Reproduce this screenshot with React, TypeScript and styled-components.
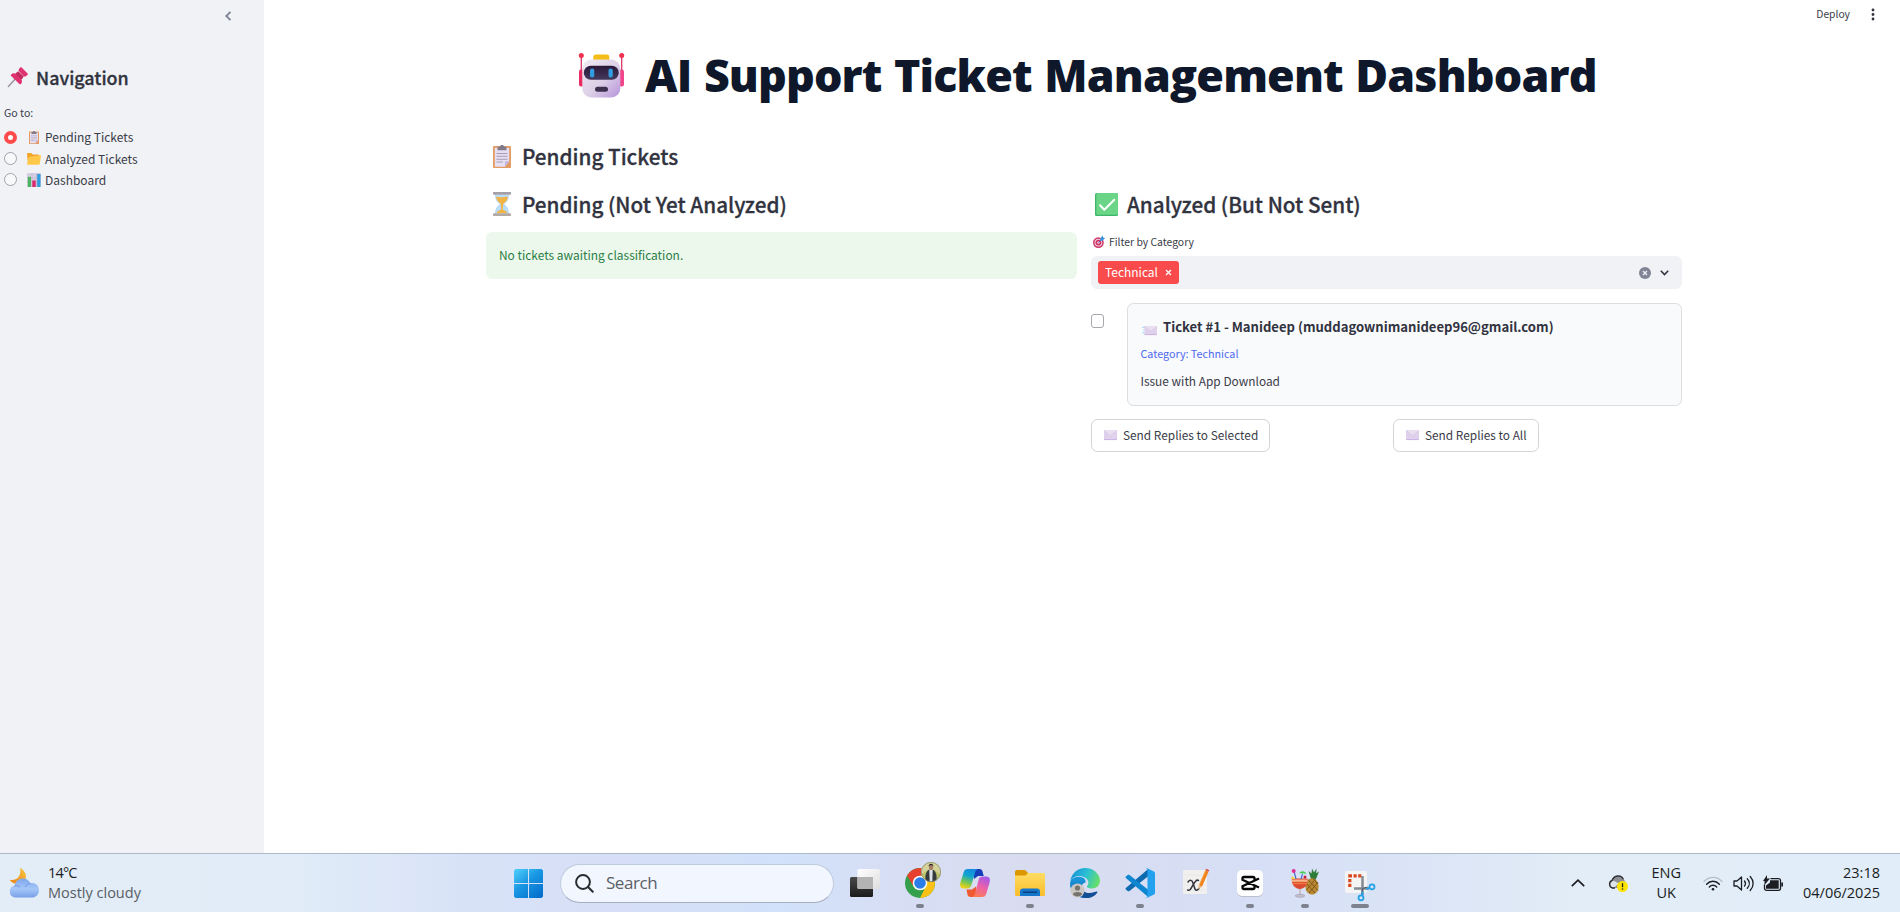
import React from "react";
import styled, { createGlobalStyle, css } from "styled-components";

const source = '"Noto Sans CJK SC", sans-serif';
const segoe = '"Open Sans", "Noto Sans", sans-serif';

const GlobalStyle = createGlobalStyle`
  * { box-sizing: border-box; }
  body { margin: 0; background: #fff; overflow: hidden; color: #3a3c48; font-family: ${source}; }
  h1, h2, h3, p { margin: 0; }
  button { font: inherit; color: inherit; background: none; border: 0; padding: 0; }
  svg { display: block; flex: none; overflow: visible; }
`;

/* ---------- emoji and small glyphs ---------- */

const Pin = ({ size = 20 }: { size?: number }) => (
  <svg width={size} height={size} viewBox="0 0 20 20">
    <path d="M7.6 11.4 0.4 19.4" stroke="#9b95a3" strokeWidth="1.5" strokeLinecap="round" />
    <path d="M9.3 5.2 15 10.8 11.6 14.6 5.6 8.6Z" fill="#b52055" />
    <path d="M3.2 7.4C5 5.8 7 6 8.6 7.6l4.2 4.2c1.600 1.600 1.600 3.600.2 5.200-.5.5-1.100.4-1.600 0L3.200 9c-.6-.6-.5-1.100 0-1.600Z" fill="#e0326f" />
    <path d="M11.800.8c.5-.6 1.200-.8 1.800-.2l5.800 5.600c.6.6.6 1.300 0 1.800l-1.600 1.300c-.7.5-1.400.4-2-.1L11 4.300c-.5-.6-.6-1.300-.2-1.900Z" fill="#e0326f" />
    <path d="M10.200 4.200 15.800 9.600 13.600 12 7.600 6.600Z" fill="#c62a5f" />
  </svg>
);

const Clipboard = ({ w, h }: { w: number; h: number }) => (
  <svg width={w} height={h} viewBox="0 0 18 26" preserveAspectRatio="none">
    <rect y="1" width="18" height="25" rx="1" fill="#e39b62" />
    <path d="M1.800 3h14.400v15.500L12 24.500H1.800Z" fill="#e6dff2" />
    <path d="M16.200 18.500 12 24.500v-5c0-.6.4-1 1-1Z" fill="#c4b3dc" />
    <path d="M4.500 2h2.300C7 .7 7.800 0 9 0s2 .7 2.200 2h2.300v3.800h-9Z" fill="#82798b" />
    <path d="M3.500 9.500h11M3.500 12.700h11M3.500 16h11M3.500 19.200h6.500" stroke="#a69db3" strokeWidth="1.100" />
  </svg>
);

const Folder = () => (
  <svg width="14" height="12" viewBox="0 0 14 12">
    <path d="M0 1.200C0 .5.5 0 1.200 0h3l1.500 1.500h5.100c.7 0 1.200.5 1.200 1.200V11H1Z" fill="#f0a52a" />
    <path d="M2.600 3.700 13 2.200c.7-.1 1.100.3 1 .9l-1.200 7.600c-.1.700-.5 1.100-1.200 1.100H1.200C.4 11.800 0 11.300.2 10.500L1.600 4.700c.2-.6.5-.9 1-1Z" fill="#ffc84a" />
  </svg>
);

const BarChart = () => (
  <svg width="14" height="14" viewBox="0 0 14 14">
    <rect width="14" height="14" rx="1" fill="#d5cde3" />
    <path d="M0 5h14M0 9h14M5 0v14M9.500 0v14" stroke="#b7adc7" strokeWidth=".5" />
    <rect x=".8" y="3.800" width="3.200" height="10.200" fill="#4cb463" />
    <rect x="5.300" y="7.500" width="3.400" height="6.500" fill="#d8286b" />
    <rect x="10.200" y="1" width="3.300" height="13" fill="#2f9cdf" />
  </svg>
);

const Robot = () => (
  <svg width="45" height="45" viewBox="0 0 45 45">
    <defs>
      <linearGradient id="head" x1="0" y1="0" x2="1" y2="1">
        <stop offset="0" stopColor="#f1ebf3" /><stop offset=".55" stopColor="#dccfe6" /><stop offset="1" stopColor="#b692dc" />
      </linearGradient>
      <linearGradient id="visor" x1="0" y1="0" x2="0" y2="1">
        <stop offset="0" stopColor="#2a1738" /><stop offset="1" stopColor="#443a5c" />
      </linearGradient>
    </defs>
    <path d="M2.300 3v16M42.700 3v16" stroke="#d93869" strokeWidth="1.300" />
    <circle cx="2.300" cy="2.600" r="2.500" fill="#f2304f" /><circle cx="42.700" cy="2.600" r="2.500" fill="#f2304f" />
    <rect x="0" y="16.500" width="5" height="17" rx="2" fill="#e92d63" /><rect x="40" y="16.500" width="5" height="17" rx="2" fill="#f0468b" />
    <rect x="14.300" y="1.500" width="16" height="7" rx="2.500" fill="#f4bd17" />
    <rect x="3.300" y="6.500" width="38" height="38" rx="9" fill="url(#head)" />
    <rect x="4.800" y="12.700" width="35" height="14" rx="7" fill="url(#visor)" />
    <rect x="11" y="15.500" width="4.300" height="9" rx="2.100" fill="#319de0" /><rect x="29.500" y="15.500" width="4.300" height="9" rx="2.100" fill="#319de0" />
    <rect x="16" y="33.700" width="13" height="5" rx="2.500" fill="#3e3150" />
  </svg>
);

const Hourglass = () => (
  <svg width="18" height="24" viewBox="0 0 18 24">
    <path d="M2 2.500h14c0 5-1.500 7-4.800 9.500C14.500 14.500 16 17 16 21.500H2c0-4.500 1.500-7 4.800-9.500C3.500 9.500 2 7.500 2 2.500Z" fill="#b9dcfa" />
    <path d="M3 4.500c3 1.400 9 .2 12 .2-.3 3-2 5-4.700 7l-.6 6c2.300.6 4.300 2 4.800 3.300H3.500c.6-1.600 2.600-2.800 4.800-3.300l-.6-6C5 9.700 3.200 7.500 3 4.500Z" fill="#efb443" />
    <rect width="18" height="2.700" rx=".8" fill="#a3a0a8" /><rect y="21.300" width="18" height="2.700" rx=".8" fill="#b1a9a3" />
  </svg>
);

const CheckMark = () => (
  <svg width="23" height="23" viewBox="0 0 23 23">
    <rect width="23" height="23" rx="1.500" fill="#3fb56b" />
    <rect x="1.300" width="21.700" height="21.700" rx="1.500" fill="#6bd587" />
    <path d="M5 12.200 9.300 16.800 19.300 6.800" fill="none" stroke="#fff" strokeWidth="2" strokeLinecap="round" strokeLinejoin="round" />
  </svg>
);

const Target = () => (
  <svg width="12" height="12" viewBox="0 0 12 12">
    <circle cx="5.400" cy="6.600" r="5.400" fill="#cf3568" /><circle cx="5.400" cy="6.600" r="3.900" fill="#eccfe0" />
    <circle cx="5.400" cy="6.600" r="2.900" fill="#d23466" /><circle cx="5.400" cy="6.600" r="1.200" fill="#f3dbe7" />
    <path d="M5.500 6.500 9 3" stroke="#4a76bd" strokeWidth="1" /><path d="M7.300 2.400 9.700-.4l.5 1.900 1.900.5L9.600 4.800 7.300 4.700Z" fill="#3a93dd" />
  </svg>
);

const Envelope = ({ flying = false }: { flying?: boolean }) => (
  <svg width={flying ? 15 : 13} height={flying ? 9 : 10} viewBox={flying ? "-2.500 0 15.500 10" : "0 0 13 10"} preserveAspectRatio="none">
    {flying && <path d="M-2.500 1.500H.5M-1.500 4.500H.5M-2.500 7.500H.5" stroke="#93d3f3" strokeWidth=".9" />}
    <rect width="13" height="10" rx=".6" fill="#dfd0ec" />
    <path d="M0 .5 6.500 6 13 .5V0H0Z" fill="#e9dff0" /><path d="M0 .5 6.500 5.900 13 .5" fill="none" stroke="#cdb9df" strokeWidth=".5" />
    <path d="M0 9.600h13" stroke="#c7a9e2" strokeWidth=".8" />
  </svg>
);

/* ---------- app shell ---------- */

const Screen = styled.div`display: flex; flex-direction: column; width: 1900px; height: 912px;`;
const AppArea = styled.div`display: flex; height: 853px;`;

const Sidebar = styled.aside`
  width: 264px; flex: none; background: #f0f2f6; display: flex; flex-direction: column; padding: 10px 0 0 4px;
`;
const Collapse = styled.button`display: flex; align-self: flex-end; margin-right: 32px; height: 12px; align-items: center;`;
const SideTitle = styled.h2`
  display: flex; align-items: center; gap: 8px; height: 26px; margin: 42px 0 0 4px; color: #31333f;
  font-size: 17.900px; font-weight: 500; line-height: 26px; -webkit-text-stroke: .3px #31333f;
`;
const SideLabel = styled.p`margin-top: 15px; font-size: 10.600px; line-height: 16px;`;
const RadioGroup = styled.div`display: flex; flex-direction: column; margin-top: 5.500px;`;
const RadioRow = styled.label`display: flex; align-items: center; height: 21.400px; font-size: 12px; line-height: 20px;`;
const RadioDot = styled.span<{ $on?: boolean }>`
  width: 13px; height: 13px; border-radius: 50%; margin-right: 9.500px; background: ${p => (p.$on ? "#fff" : "#f8f9fb")};
  border: ${p => (p.$on ? "4px solid #ff4b4b" : "1px solid #a0a2a9")};
`;
const EmojiSlot = styled.span`width: 14px; display: flex; justify-content: center; margin-right: 4.500px;`;

const Main = styled.main`flex: 1; display: flex; flex-direction: column;`;
const TopBar = styled.header`
  height: 28px; display: flex; align-items: center; justify-content: flex-end; gap: 21px; padding-right: 25px;
  font-size: 10.300px; line-height: 16px;
`;
const Title = styled.h1`
  display: flex; align-items: center; gap: 21px; height: 60px; margin: 17px 0 0 315px;
  font: 800 44.800px/60px ${segoe}; letter-spacing: -.860px; word-spacing: 1.700px; color: #0f172a; white-space: nowrap;
`;
const Content = styled.div`width: 1196px; margin: 37px 0 0 222px;`;
const Heading = styled.h3<{ $gap: number; $inset?: number }>`
  display: flex; align-items: center; gap: ${p => p.$gap}px; height: 28px; color: #31333f;
  font-size: 20.700px; font-weight: 500; line-height: 28px; -webkit-text-stroke: .3px #31333f;
  padding-left: ${p => p.$inset ?? 7}px;
`;
const Columns = styled.div`display: grid; grid-template-columns: 591px 591px; gap: 14px; margin-top: 20px;`;
const Success = styled.div`
  height: 47px; margin-top: 14px; padding: 0 13px 2px; display: flex; align-items: center;
  border-radius: 6.400px; background: #ecf8ec; color: #2a7d45; font-size: 11.930px;
`;
const FilterLabel = styled.p`
  display: flex; align-items: center; gap: 4px; height: 16px; margin: 16px 0 6px; padding-left: 2px;
  font-size: 10.390px; line-height: 16px;
`;
const Select = styled.div`
  height: 33px; border-radius: 6.400px; background: #f0f2f6; display: flex; align-items: center; padding: 0 13px 0 7px;
`;
const Tag = styled.span`
  height: 23px; display: flex; align-items: center; gap: 7px; padding: 0 7px; margin-right: auto;
  border-radius: 3px; background: #f94b4b; color: #fff; font-size: 11.970px; line-height: 20px;
`;
const TagText = styled.span`margin-top: -2px;`;
const SelectActions = styled.span`display: flex; align-items: center; gap: 9px;`;
const TicketRow = styled.div`display: flex; margin-top: 14px;`;
const Checkbox = styled.span`
  width: 13px; height: 14px; margin: 11px 23px 0 0; border: 1px solid #a6a8af; border-radius: 3px; background: #fff;
`;
const Card = styled.article`
  flex: 1; height: 103px; padding: 13px 13px 0; border: 1px solid #dcdde1; border-radius: 6.400px; background: #f9fafc;
`;
const TicketTitle = styled.p`
  display: flex; align-items: center; gap: 6px; padding-left: 1px; height: 20px; color: #31333f;
  font-size: 13.080px; font-weight: 700; line-height: 20px;
  svg { margin-top: 6px; }
`;
const Category = styled.p`margin: 9px 0 0 -.500px; font-size: 10.750px; line-height: 16px; color: #4f6af0;`;
const Issue = styled.p`margin: 9px 0 0 -.500px; font-size: 11.900px; line-height: 20px;`;
const Actions = styled.div`display: grid; grid-template-columns: 302px auto; margin-top: 13px; justify-content: start;`;
const ActionButton = styled.button`
  height: 33px; justify-self: start; display: flex; align-items: center; gap: 6px; padding: 0 11px 1.500px 12px;
  border: 1px solid #d3d4d8; border-radius: 6.400px; background: #fff; font-size: 11.850px; line-height: 20px;
`;

/* ---------- taskbar ---------- */

const Taskbar = styled.footer`
  height: 59px; border-top: 1px solid #adb9c8; display: flex; align-items: center; color: #1b1d22;
  font: 400 14.500px/20px ${segoe};
  background: linear-gradient(90deg, #e3edf7 0, #e1ecf8 290px, #d8e2f7 470px, #d6dff7 620px, #d2e2fa 780px, #d6def5 880px, #d9dcef 1030px, #d6dff6 1250px, #dbe5f6 1430px, #e2edf7 1580px, #e1edf9 1900px);
`;
const Weather = styled.div`
  display: flex; align-items: center; gap: 9px; width: 514px; padding-left: 9px;
  svg { margin-top: -1px; }
`;
const TwoLines = styled.div<{ $align?: string }>`
  display: flex; flex-direction: column; margin-top: -1px; text-align: ${p => p.$align || "left"};
  span { line-height: 20px; }
`;
const Temp = styled.span`letter-spacing: -.850px;`;
const Muted = styled.span`color: #585d64;`;
const SearchBox = styled.div`
  width: 274px; height: 39px; margin-left: 17px; padding-left: 14px; display: flex; align-items: center; gap: 12px;
  border: 1px solid #c0cbdf; border-bottom-color: #a5afc0; border-radius: 20px; background: #f2f6fe;
  color: #5b5f66; font-size: 17px; letter-spacing: -.450px;
`;
const Apps = styled.div`display: flex; margin-left: 3px; height: 58px;`;
const AppSlot = styled.div<{ $state?: "open" | "active" }>`
  position: relative; width: 55px; height: 58px; display: flex; align-items: center; justify-content: center;
  ${p => p.$state && css`
    &::after {
      content: ""; position: absolute; bottom: 4px; left: 50%; height: 4px; border-radius: 2px; background: #7d828e;
      width: ${p.$state === "active" ? 18 : 8}px; transform: translateX(-50%);
    }
  `}
`;
const Nudge = styled.span<{ $x: number; $y: number }>`
  padding: ${p => Math.max(p.$y, 0)}px 0 ${p => Math.max(-p.$y, 0)}px ${p => p.$x}px;
`;
const Tray = styled.div`display: flex; align-items: center; margin-left: auto; padding-right: 20px;`;
const Spaced = styled.div<{ $left: number }>`margin-left: ${p => p.$left}px;`;

const TaskView = () => (
  <svg width="30" height="28" viewBox="0 0 30 28">
    <defs>
      <linearGradient id="tvb" x1="0" y1="0" x2="0" y2="1"><stop stopColor="#484848" /><stop offset="1" stopColor="#1b1b1b" /></linearGradient>
      <linearGradient id="tvw" x1="0" y1="0" x2="1" y2="1"><stop stopColor="#fff" /><stop offset="1" stopColor="#dedede" /></linearGradient>
    </defs>
    <rect y="8" width="23" height="20" rx="1.500" fill="url(#tvb)" /><rect x="7.500" width="22.500" height="20" rx="1.500" fill="url(#tvw)" />
    <path d="M7.500 8H23v12H9a1.500 1.500 0 0 1-1.500-1.500Z" fill="#b3b3b3" />
  </svg>
);
const Chrome = () => (
  <svg width="36" height="36" viewBox="0 0 36 36">
    <circle cx="15" cy="21" r="15" fill="#34a04c" />
    <path d="M27.990 13.500A15 15 0 0 1 15 36L21.500 23 15 13.500Z" fill="#fbc116" />
    <path d="M2.010 13.500A15 15 0 0 1 27.990 13.500H15L8.500 24.500Z" fill="#e8402f" />
    <circle cx="15" cy="21" r="7.300" fill="#fff" /><circle cx="15" cy="21" r="5.800" fill="#2b7de9" />
    <circle cx="26" cy="10" r="10" fill="#bdc36b" /><path d="M16.200 8a10 10 0 0 1 19.600 0l-1 4-4-3-4.800-3-5 3-4 3Z" fill="#d5d29b" />
    <path d="M20.500 18.300c-.6-4 .2-8 2.700-10.300h5.600c2.500 2.300 3.300 6.300 2.700 10.300a10 10 0 0 1-11 0Z" fill="#373b3d" />
    <path d="m24.300 8 .4 11.500h2.600L27.700 8Z" fill="#dfe3ea" /><ellipse cx="26" cy="5.200" rx="2.100" ry="3" fill="#a9816b" />
    <path d="M23.700 4.500C23.400.8 28.600.8 28.300 4.500l-1.200-1.200h-2.200Z" fill="#26211f" /><circle cx="26" cy="10" r="9.600" fill="none" stroke="#8b907c" strokeWidth=".8" />
  </svg>
);
const Copilot = () => (
  <svg width="30" height="28" viewBox="0 0 30 28">
    <defs>
      <linearGradient id="ca" x1=".6" y1="0" x2=".3" y2="1"><stop stopColor="#168ae0" /><stop offset=".35" stopColor="#10a5cf" /><stop offset=".7" stopColor="#7bc750" /><stop offset="1" stopColor="#f3d313" /></linearGradient>
      <linearGradient id="cb" x1=".7" y1="0" x2=".3" y2="1"><stop stopColor="#a45ae7" /><stop offset=".5" stopColor="#ed61a7" /><stop offset="1" stopColor="#fb7c53" /></linearGradient>
    </defs>
    <path d="M14 0h5.500c1.900 0 2.600 1 3.100 2.700L23.700 7H18l-4 3Z" fill="#173fb9" />
    <path d="M7.800 0H18c-1.700.4-2.400 1.700-3 3.800l-3.600 12.300c-.7 2.400-1.900 3.400-4.400 3.400H3.800C.4 19.500-.5 16.600.4 13.500L3.700 3.300C4.400 1.100 5.600 0 7.800 0Z" fill="url(#ca)" />
    <path d="M16 28h-5.500c-1.900 0-2.600-1-3.100-2.700L6.500 20.500H12l4-3Z" fill="#f05a32" />
    <path d="M22.200 28H12c1.700-.4 2.400-1.700 3-3.800L18.600 11c.7-2.400 1.900-3.400 4.400-3.400h3.200c3.400 0 4.300 2.900 3.400 6l-3.300 11.100c-.7 2.200-1.900 3.300-4.100 3.300Z" fill="url(#cb)" />
  </svg>
);
const Explorer = () => (
  <svg width="30" height="28" viewBox="0 0 30 28">
    <defs><linearGradient id="fe" x1="0" y1="0" x2="0" y2="1"><stop stopColor="#ffdc64" /><stop offset="1" stopColor="#f9bd2b" /></linearGradient></defs>
    <path d="M0 3c0-1.100.9-2 2-2h7c1 0 1.500.3 2.200 1L13 4v4H0Z" fill="#dc9800" />
    <path d="M0 6.500h10.500L13 4h15.500c.9 0 1.500.6 1.500 1.500v20c0 .9-.6 1.500-1.500 1.500H1.500C.6 27 0 26.400 0 25.500Z" fill="url(#fe)" />
    <path d="M5 27v-4.500c0-1.700 1.300-3 3-3h14c1.700 0 3 1.300 3 3V27Z" fill="#1477cc" /><path d="M8.500 23.300h13" stroke="#0a3f80" strokeWidth="1.400" strokeLinecap="round" />
  </svg>
);
const Edge = () => (
  <svg width="30" height="30" viewBox="0 0 30 30">
    <defs>
      <linearGradient id="e1" x1="0" y1=".3" x2="1" y2=".6"><stop stopColor="#1793d6" /><stop offset=".5" stopColor="#2bc0d4" /><stop offset="1" stopColor="#6ae065" /></linearGradient>
      <linearGradient id="e2" x1="0" y1="0" x2="0" y2="1"><stop stopColor="#1b9cde" /><stop offset="1" stopColor="#0f5fb2" /></linearGradient>
    </defs>
    <path d="M0 15.500C.5 10 6 8 11 9c3.500.8 5 3 4.500 5.500-4 1-5 5-3.500 8.500 2 4 7 5 12 3.500-3.500 3-8 4-12 3.300C5 28.500 0 23 0 15.500Z" fill="url(#e2)" />
    <path d="M12 18c-.5 5.500 5 9 12.500 6 1.500-.5 3-1 3 .2-2.500 4-7.500 6.500-12.500 5.800C10 28.500 9 22 12 18Z" fill="#134f97" />
    <path d="M.1 13.500C1.500 5 8 0 15 0c9 0 15 6.500 15 12.500 0 5-3.500 8-8 8-3.500 0-5.500-1.200-5-2.300 1.800-1.800 2-4.500.3-6.600C13 6 3 7 .1 13.500Z" fill="url(#e1)" />
    <circle cx="7.500" cy="22.500" r="7" fill="#c9c6c3" /><circle cx="7.500" cy="20" r="2.600" fill="#77736f" /><path d="M3 26.500c0-3.200 9-3.200 9 0-2 2.500-7 2.500-9 0Z" fill="#77736f" />
  </svg>
);
const VsCode = () => (
  <svg width="30" height="30" viewBox="0 0 30 30">
    <path d="M.8 21.500 2.700 22.900c.6.500 1.200.5 1.800.1L23.500 8V.8L.8 20C.4 20.500.4 21 .8 21.500Z" fill="#0e6bb0" />
    <path d="M.8 8.500 2.700 7.100c.6-.5 1.200-.5 1.800-.1L23.500 22v7.200L.8 10C.4 9.500.4 9 .8 8.500Z" fill="#0e87d0" />
    <path d="M21.700 0 29 3.400c.6.300 1 .9 1 1.600v20c0 .7-.4 1.300-1 1.600L21.700 30c-.7.200-1.200 0-1.700-.5.8.7 2.500.2 2.500-1.300V1.800C22.500.3 20.800-.2 20 .5c.5-.5 1-.7 1.700-.5Z" fill="#23a0ee" />
  </svg>
);
const Xournal = () => (
  <svg width="26" height="26" viewBox="0 0 26 26">
    <rect y="1" width="24" height="24" rx="1" fill="#f1f0ee" /><path d="M0 6h24M0 11h24M0 16h24M0 21h24" stroke="#e2e4ea" strokeWidth=".6" />
    <path d="M5 13c2-2.500 4-2 4.800.5l2 6c.7 2.500 2.500 2 4.200 0M15.500 11.500c-2-1.500-4 2-5.500 4.500s-3 6.500-5.300 5" fill="none" stroke="#34343d" strokeWidth="1.500" strokeLinecap="round" />
    <path d="m24 2-6.500 15" stroke="#ef831e" strokeWidth="3.200" /><path d="m22.600 1.400-6.300 14.800" stroke="#f9a743" strokeWidth=".8" /><path d="m15.800 16.200-.6 4 3.900-2.500Z" fill="#e8b885" /><path d="m22.500 1.200.8-1.400 3 1.400-.6 1.400Z" fill="#de4a38" />
  </svg>
);
const CapCut = () => (
  <svg width="26" height="26" viewBox="0 0 26 26">
    <rect y="1" width="26" height="26" rx="5" fill="#bcc0ca" /><rect width="26" height="26" rx="5" fill="#fff" />
    <path d="M17.500 10V8.500c0-1-.4-1.500-1.500-1.500H7c-1 0-1.500.5-1.500 1.500v1.300L22 17.500M17.500 16v1.500c0 1-.4 1.500-1.500 1.500H7c-1 0-1.500-.5-1.500-1.500v-1.300L22 8.500" fill="none" stroke="#080808" strokeWidth="2.300" />
  </svg>
);
const Fruit = () => (
  <svg width="28" height="30" viewBox="0 0 28 30">
    <path d="M20 11 17.500 3l3 2.500L21 .5l2 4 2.500-4-.3 4.800L28 3.500 25 11Z" fill="#2f7b38" />
    <ellipse cx="21" cy="18.500" rx="6.700" ry="8.300" fill="#b98a35" />
    <path d="m15 15 9 10M17 11.500l10 11M22 10.500l5 5.500M27 14l-9 11M24.500 11 15.500 22" stroke="#7c5417" strokeWidth=".9" />
    <path d="M9 20v7" stroke="#c7b5b5" strokeWidth="1.500" /><ellipse cx="9" cy="27.800" rx="4.800" ry="1.500" fill="#c3bfcd" stroke="#978f9e" strokeWidth=".5" />
    <path d="M1 10.500h15.500c1 5-2.500 10.500-7.700 10.500S0 15.500 1 10.500Z" fill="#dc4a32" /><path d="M1 11.500h15.500v2.300H1Z" fill="#f7b586" /><path d="M1.500 15.500h14.500" stroke="#f07a3c" strokeWidth="1.500" />
    <path d="m5 11-2-8M10 11l1.500-5" stroke="#3d68c6" strokeWidth="1.100" /><circle cx="2.700" cy="3" r="2" fill="#e22f92" /><path d="M8.500 5.500c1-3.500 6-2.500 7 .6-2-1-4-1.200-7-.6Z" fill="#3ccf4b" /><circle cx="14" cy="9" r="1.500" fill="#c91e31" /><path d="M1 8 4.500 11H0Z" fill="#f1d048" />
  </svg>
);
const Snip = () => (
  <svg width="30" height="30" viewBox="0 0 30 30">
    <rect y="0" width="22" height="22" rx="2" fill="#f4f4f5" />
    <path d="M3.200 3.200H7v3.200H3.200ZM8.500 3.200h3.200v3.200H8.500ZM13.200 3.200h3.200v3.200h-3.200ZM3.200 8h3.200v3.200H3.200ZM3.200 12.800h3.200V16H3.200Z" fill="#d9471c" />
    <path d="M17.500 5v19M9 17.500h15" stroke="#858b93" strokeWidth="2.500" /><path d="m17.500 17.500 5-1.500M17.500 17.500l-.5 6" stroke="#5a626b" strokeWidth="1.200" />
    <circle cx="27" cy="15.800" r="2.500" fill="none" stroke="#25a2e6" strokeWidth="1.800" /><circle cx="16" cy="26.800" r="2.500" fill="none" stroke="#25a2e6" strokeWidth="1.800" />
    <path d="m21 18 3.800-1.200M17.800 20.500l-.8 4" stroke="#25a2e6" strokeWidth="1.800" />
  </svg>
);
const WeatherIcon = () => (
  <svg width="30" height="30" viewBox="0 0 30 30">
    <defs>
      <linearGradient id="cloud" x1="0" y1="0" x2="0" y2="1"><stop stopColor="#7fa6ee" /><stop offset=".55" stopColor="#a4c6f8" /><stop offset="1" stopColor="#7aa0e8" /></linearGradient>
      <linearGradient id="moon" x1="1" y1="0" x2="0" y2="1"><stop stopColor="#f8c63c" /><stop offset="1" stopColor="#ec8216" /></linearGradient>
    </defs>
    <path d="M11 0c5 2 7.500 8 5 12.500-3.500 5-12 4.500-15.500-.7C7 13.500 13 8 11 0Z" fill="url(#moon)" />
    <path d="M6 29.500a6 6 0 0 1-.5-11.800C6.500 13 10 10.500 14 10.500c3.500 0 6 1.700 7.300 4.700 5-.8 8.700 2.500 8.700 7 0 4-3 7.300-7.200 7.300Z" fill="url(#cloud)" />
    <path d="M5.500 17.700c2.500-.4 4.200.2 5.500 1.500M21.300 15.200c-2.500.5-4.300 1.800-5 3.800" fill="none" stroke="#6c93df" strokeWidth=".9" />
  </svg>
);
const StartLogo = () => (
  <svg width="29" height="29" viewBox="0 0 29 29">
    <defs><linearGradient id="win" gradientUnits="userSpaceOnUse" x1="0" y1="0" x2="24" y2="29"><stop stopColor="#4fd0fb" /><stop offset=".5" stopColor="#1895e2" /><stop offset="1" stopColor="#0670cd" /></linearGradient></defs>
    <path d="M1.500 0H14v14H0V1.500ZM15 0h12.500L29 1.500V14H15ZM0 15h14v14H1.500L0 27.500ZM15 15h14v12.500L27.500 29H15Z" fill="url(#win)" />
  </svg>
);

const apps: { name: string; icon: React.ReactNode; state?: "open" | "active" }[] = [
  { name: "tasks", icon: <TaskView /> },
  { name: "chrome", icon: <Nudge $x={6} $y={-6}><Chrome /></Nudge>, state: "open" },
  { name: "copilot", icon: <Copilot /> },
  { name: "explorer", icon: <Explorer />, state: "open" },
  { name: "edge", icon: <Edge /> },
  { name: "code", icon: <VsCode />, state: "open" },
  { name: "notes", icon: <Nudge $x={2} $y={-2}><Xournal /></Nudge> },
  { name: "video", icon: <CapCut />, state: "open" },
  { name: "fruit", icon: <Fruit />, state: "open" },
  { name: "snip", icon: <Nudge $x={0} $y={5}><Snip /></Nudge>, state: "active" },
];

const pages = [
  { label: "Pending Tickets", icon: <Clipboard w={10} h={13} />, on: true },
  { label: "Analyzed Tickets", icon: <Folder /> },
  { label: "Dashboard", icon: <BarChart /> },
];

export default function App() {
  return (
    <Screen>
      <GlobalStyle />
      <AppArea>
        <Sidebar>
          <Collapse aria-label="Collapse sidebar">
            <svg width="7" height="10" viewBox="0 0 7 10"><path d="M5.500.8 1.300 5l4.200 4.200" fill="none" stroke="#808495" strokeWidth="1.900" /></svg>
          </Collapse>
          <SideTitle><Pin />Navigation</SideTitle>
          <SideLabel>Go to:</SideLabel>
          <RadioGroup>
            {pages.map(p => (
              <RadioRow key={p.label}><RadioDot $on={p.on} /><EmojiSlot>{p.icon}</EmojiSlot>{p.label}</RadioRow>
            ))}
          </RadioGroup>
        </Sidebar>
        <Main>
          <TopBar>
            <span>Deploy</span>
            <svg width="4" height="13" viewBox="0 0 4 13" fill="#31333f"><circle cx="2" cy="2" r="1.400" /><circle cx="2" cy="6.500" r="1.400" /><circle cx="2" cy="11" r="1.400" /></svg>
          </TopBar>
          <Title><Robot />AI Support Ticket Management Dashboard</Title>
          <Content>
            <Heading $gap={11}><Clipboard w={18} h={23} />Pending Tickets</Heading>
            <Columns>
              <section>
                <Heading $gap={11}><Hourglass />Pending (Not Yet Analyzed)</Heading>
                <Success>No tickets awaiting classification.</Success>
              </section>
              <section>
                <Heading $gap={9} $inset={4}><CheckMark />Analyzed (But Not Sent)</Heading>
                <FilterLabel><Target />Filter by Category</FilterLabel>
                <Select>
                  <Tag><TagText>Technical</TagText>
                    <svg width="7" height="7" viewBox="0 0 7 7"><path d="m1 1 5 5M6 1 1 6" stroke="#fff" strokeWidth="1.300" /></svg>
                  </Tag>
                  <SelectActions>
                    <svg width="12" height="12" viewBox="0 0 12 12"><circle cx="6" cy="6" r="6" fill="#808495" /><path d="m4 4 4 4M8 4 4 8" stroke="#f0f2f6" strokeWidth="1.300" /></svg>
                    <svg width="9" height="6" viewBox="0 0 9 6"><path d="m.8.8 3.700 3.700L8.200.8" fill="none" stroke="#31333f" strokeWidth="1.600" /></svg>
                  </SelectActions>
                </Select>
                <TicketRow>
                  <Checkbox />
                  <Card>
                    <TicketTitle><Envelope flying />Ticket #1 - Manideep (muddagownimanideep96@gmail.com)</TicketTitle>
                    <Category>Category: Technical</Category>
                    <Issue>Issue with App Download</Issue>
                  </Card>
                </TicketRow>
                <Actions>
                  <ActionButton><Envelope />Send Replies to Selected</ActionButton>
                  <ActionButton><Envelope />Send Replies to All</ActionButton>
                </Actions>
              </section>
            </Columns>
          </Content>
        </Main>
      </AppArea>
      <Taskbar>
        <Weather><WeatherIcon /><TwoLines><Temp>14°C</Temp><Muted>Mostly cloudy</Muted></TwoLines></Weather>
        <StartLogo />
        <SearchBox>
          <svg width="19" height="19" viewBox="0 0 19 19" fill="none" stroke="#292b2f" strokeWidth="2" strokeLinecap="round"><circle cx="8" cy="8" r="6.900" /><path d="m13 13 4.800 4.800" /></svg>
          Search
        </SearchBox>
        <Apps>{apps.map(a => <AppSlot key={a.name} $state={a.state}>{a.icon}</AppSlot>)}</Apps>
        <Tray>
          <svg width="14" height="8" viewBox="0 0 14 8"><path d="m.8 7.200 6.200-6 6.200 6" fill="none" stroke="#1b1d22" strokeWidth="1.700" /></svg>
          <Spaced $left={23}>
            <svg width="20" height="17" viewBox="0 0 20 17">
              <path d="M4.500 13A4 4 0 0 1 4.500 5.500C6 1.500 12 0 15 4.500c1.500.5 2.500 1.500 2.500 3.500L12 13Z" fill="#8d9095" /><path d="M5.500 13.200C1 13.500-.5 8 3.500 6c2.500-1 4.500 1 7 2.500" fill="#dde5ec" />
              <path d="M7 13H4.500A4 4 0 0 1 4 5.500C6 .2 13-.8 15.500 4.500" fill="none" stroke="#2b2c2f" strokeWidth="1.400" />
              <circle cx="14.500" cy="11.500" r="5.500" fill="#fde300" /><path d="M14.500 8.200v4" stroke="#222" strokeWidth="1.300" /><circle cx="14.500" cy="14" r=".8" fill="#222" />
            </svg>
          </Spaced>
          <Spaced $left={24}><TwoLines $align="center"><span>ENG</span><span>UK</span></TwoLines></Spaced>
          <Spaced $left={22}>
            <svg width="20" height="15" viewBox="0 0 20 15" fill="none" stroke="#1b1d22" strokeWidth="1.400" strokeLinecap="round">
              <path d="M1 5.500c5-5.500 13-5.500 18 0" stroke="#b4bfca" /><path d="M3.600 8.200c3.600-3.900 9.200-3.900 12.800 0M6.300 10.900c2.100-2.200 5.300-2.200 7.400 0" /><circle cx="10" cy="13.300" r="1.300" fill="#1b1d22" stroke="none" />
            </svg>
          </Spaced>
          <Spaced $left={10}>
            <svg width="21" height="17" viewBox="0 0 21 17" fill="none" stroke="#1b1d22" strokeWidth="1.300" strokeLinecap="round" strokeLinejoin="round">
              <path d="M1 6v5h3l4.500 4V2L4 6Z" /><path d="M11.500 6c1.200 1.500 1.200 3.500 0 5M14.300 3.800c2.600 2.800 2.600 6.600 0 9.400M17.200 1.500c3.900 4.200 3.900 9.800 0 14" />
            </svg>
          </Spaced>
          <Spaced $left={9}>
            <svg width="20" height="16" viewBox="0 0 20 16">
              <path d="M7.500 3.700h8a2 2 0 0 1 2 2v7.600a2 2 0 0 1-2 2H3.500a2 2 0 0 1-2-2V9.500" fill="none" stroke="#1b1d22" strokeWidth="1.300" /><path d="M7 5.200h8.700v8.600H3V10.500L7 7.500Z" fill="#1b1d22" />
              <path d="M18.300 7.500h1.700v4h-1.700Z" fill="#1b1d22" /><path d="M4 0v3.500h3L1.500 10V6H0Z" fill="#1b1d22" />
            </svg>
          </Spaced>
          <Spaced $left={20}><TwoLines $align="right"><span>23:18</span><span>04/06/2025</span></TwoLines></Spaced>
        </Tray>
      </Taskbar>
    </Screen>
  );
}
